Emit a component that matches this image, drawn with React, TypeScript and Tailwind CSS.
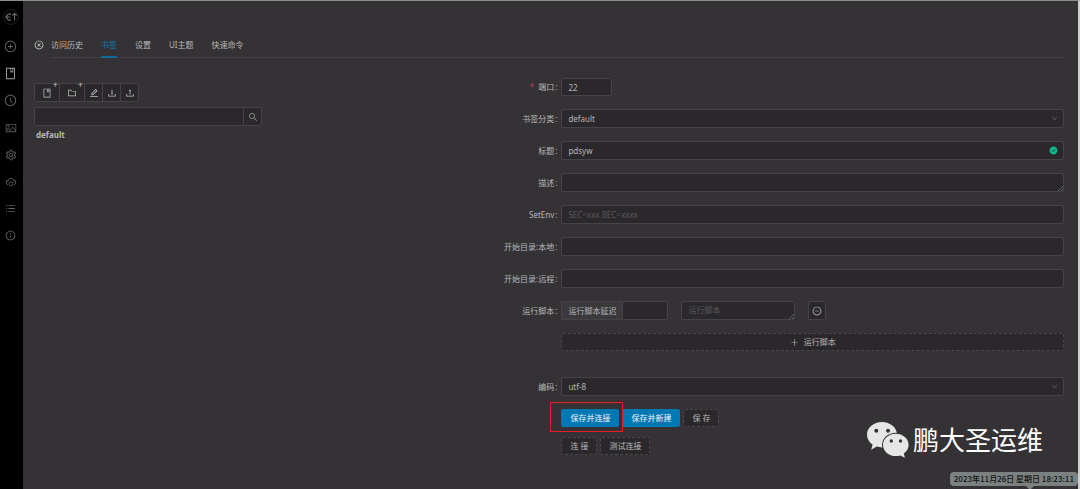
import React from "react";
import {
  AiFillCheckCircle,
  AiOutlineBook,
  AiOutlineClockCircle,
  AiOutlineCloseCircle,
  AiOutlineCloudSync,
  AiOutlineDown,
  AiOutlineDownload,
  AiOutlineEdit,
  AiOutlineFolder,
  AiOutlineInfoCircle,
  AiOutlineMinusCircle,
  AiOutlinePicture,
  AiOutlinePlus,
  AiOutlinePlusCircle,
  AiOutlineSearch,
  AiOutlineSetting,
  AiOutlineUnorderedList,
  AiOutlineUpload,
} from "react-icons/ai";

const box = "w-full min-w-0 rounded-xs border border-[#454346] bg-[#2a282b] px-1.5 leading-4 text-[#b8b7b8] outline-none placeholder:text-[#5a585b]";
const field = "h-[19px] " + box;
const dashed =
  "flex h-[18px] items-center justify-center rounded-xs border border-dashed border-[#4a484b] bg-[#2a282b] text-[#b8b7b8]";
const primary =
  "flex h-[18px] items-center justify-center rounded-xs bg-[#0078b4] px-[9px] text-[#f0f6fa]";
const tool =
  "relative flex h-[19px] items-center justify-center border border-[#454346] bg-[#2a282b] text-[10px] text-[#c4c3c4]";

function Logo() {
  return (
    <svg viewBox="0 0 16 16" className="size-4" fill="none" aria-hidden="true">
      <circle cx="8" cy="8" r="7.4" stroke="#2c2c2c" strokeWidth="0.7" />
      <path d="M8 5.400C6 4 3.600 5.500 3.600 8s2.400 3.900 4.400 2.700M2 8h5.400" stroke="#6a6a6a" strokeWidth="1.200" />
      <path d="M11.500 4.500v7M9.300 6.600l2.200-2.200 2.200 2.200" stroke="#6a6a6a" strokeWidth="1.100" />
    </svg>
  );
}

function ChatLogo() {
  return (
    <svg viewBox="0 0 42 36" className="h-9 w-[42px]" aria-hidden="true">
      <path
        d="M15 0C6.700 0 0 5.600 0 12.700c0 4.100 2.200 7.500 5.600 9.900L4.200 27.800l5.600-3.200c1.700.5 3.400.8 5.200.8 8.300 0 15-5.700 15-12.700S23.300 0 15 0Z"
        fill="#e6e6e6"
      />
      <ellipse cx="28.800" cy="23" rx="13.800" ry="12.200" fill="#343235" />
      <path
        d="M28.800 11.800c-7.100 0-12.800 4.900-12.800 11.100s5.700 11.200 12.800 11.200c1.600 0 3.100-.2 4.500-.7l4.600 2.400-1.100-4.300c3-2.100 4.800-5.100 4.800-8.600 0-6.200-5.700-11.100-12.800-11.100Z"
        fill="#e6e6e6"
      />
      <g fill="#343235">
        <circle cx="9.300" cy="8.700" r="2" />
        <circle cx="21" cy="8.700" r="2" />
        <circle cx="24.300" cy="19" r="1.700" />
        <circle cx="33.500" cy="19" r="1.700" />
      </g>
    </svg>
  );
}

const nav = [
  { name: "新建", Icon: AiOutlinePlusCircle, look: "text-[13px] text-[#646464]" },
  { name: "书签", Icon: AiOutlineBook, look: "text-[13px] text-[#a0a0a0]" },
  { name: "历史", Icon: AiOutlineClockCircle, look: "text-[13px] text-[#646464]" },
  { name: "主题", Icon: AiOutlinePicture, look: "text-[12px] text-[#585858]" },
  { name: "设置", Icon: AiOutlineSetting, look: "text-[12px] text-[#646464]" },
  { name: "同步", Icon: AiOutlineCloudSync, look: "text-[12px] text-[#646464]" },
  { name: "列表", Icon: AiOutlineUnorderedList, look: "text-[11px] text-[#646464]" },
  { name: "关于", Icon: AiOutlineInfoCircle, look: "text-[11px] text-[#646464]" },
];

const tabs = ["访问历史", "书签", "设置", "UI主题", "快速命令"];

function Row({
  label,
  id,
  required,
  className = "",
  children,
}: {
  label: string;
  id: string;
  required?: boolean;
  className?: string;
  children: React.ReactNode;
}) {
  return (
    <div className={"grid grid-cols-[68px_minmax(0,1fr)] items-center " + className}>
      <label htmlFor={id} className="pr-1 text-right whitespace-nowrap">
        {required && <span className="mr-1 text-[#c0405a]">*</span>}
        {label}
        <span className="ml-px">:</span>
      </label>
      <div className="flex">{children}</div>
    </div>
  );
}

function Select({ id, options }: { id: string; options: string[] }) {
  return (
    <div className="relative w-full">
      <select id={id} className={field + " block appearance-none"}>
        {options.map((o) => (
          <option key={o}>{o}</option>
        ))}
      </select>
      <AiOutlineDown className="pointer-events-none absolute top-1.5 right-1.5 text-[7px] text-[#6a686b]" />
    </div>
  );
}

function TextArea({ id, label, placeholder, className = "" }: { id?: string; label?: string; placeholder?: string; className?: string }) {
  return (
    <div className={"relative w-full " + className}>
      <textarea
        id={id}
        aria-label={label}
        rows={1}
        placeholder={placeholder}
        className={field + " block resize-none overflow-hidden"}
      />
      <svg viewBox="0 0 5 5" className="pointer-events-none absolute right-px bottom-px size-[5px]" aria-hidden="true">
        <path d="M0 5 5 0M3 5 5 3" stroke="#7a787b" strokeWidth="0.7" />
      </svg>
    </div>
  );
}

export default function App() {
  return (
    <div className="flex min-h-screen border-t border-r-2 border-t-[#8e8d8e] border-r-[#d0d0d0] bg-[#343235] font-['Noto_Sans','Noto_Sans_CJK_SC',sans-serif] text-[8px] leading-3 text-[#b8b7b8]">
      <nav className="flex w-[23px] shrink-0 flex-col items-center bg-black pt-2 pr-0.5">
        <Logo />
        <div className="mt-2 flex flex-col">
          {nav.map(({ name, Icon, look }) => (
            <button key={name} aria-label={name} className={"flex h-[27px] items-center justify-center " + look}>
              <Icon />
            </button>
          ))}
        </div>
      </nav>

      <main className="relative flex min-w-0 flex-1 flex-col pr-3.5 pl-[11px]">
        <header className="mt-[35px] flex">
          <button aria-label="关闭" className="mt-1 mr-[7px] flex size-2.5 text-[10px] text-[#d8d8d8]">
            <AiOutlineCloseCircle />
          </button>
          <div role="tablist" className="flex flex-1 gap-[18px] border-b border-[#434144]">
            {tabs.map((t, i) => (
              <button
                key={t}
                role="tab"
                aria-selected={i === 1}
                className={
                  i === 1
                    ? "-mb-px border-b-2 border-[#0f6a9a] pt-[3px] pb-[5px] text-[#0f78b0]"
                    : "pt-[3px] pb-1.5"
                }
              >
                {t}
              </button>
            ))}
          </div>
        </header>

        <div className="flex">
          <section className="mt-[25px] w-[228px] shrink-0">
            <div className="flex">
              <button aria-label="新建书签" className={tool + " w-[26px] rounded-l-xs"}>
                <AiOutlineBook />
                <span className="absolute -top-[5px] right-px text-[9px] leading-3">+</span>
              </button>
              <button aria-label="新建分类" className={tool + " -ml-px w-[26px]"}>
                <AiOutlineFolder />
                <span className="absolute -top-[5px] right-px text-[9px] leading-3">+</span>
              </button>
              <button aria-label="编辑" className={tool + " -ml-px w-[19px]"}>
                <AiOutlineEdit />
              </button>
              <button aria-label="导入" className={tool + " -ml-px w-[19px]"}>
                <AiOutlineDownload />
              </button>
              <button aria-label="导出" className={tool + " -ml-px w-[19px] rounded-r-xs"}>
                <AiOutlineUpload />
              </button>
            </div>
            <div className="mt-[5px] flex">
              <input aria-label="搜索书签" className={field + " rounded-r-none"} />
              <button aria-label="搜索" className={tool + " -ml-px w-[19px] shrink-0 rounded-r-xs"}>
                <AiOutlineSearch className="opacity-75" />
              </button>
            </div>
            <a href="#default" className="mt-[3px] ml-0.5 block font-bold">
              default
            </a>
          </section>

          <form className="mt-5 ml-auto flex w-[55.4%] flex-col gap-[13px]" onSubmit={(e) => e.preventDefault()}>
            <Row label="端口" id="port" required>
              <input id="port" defaultValue="22" className={box + " h-[18px] max-w-[51px]"} />
            </Row>
            <Row label="书签分类" id="category">
              <Select id="category" options={["default"]} />
            </Row>
            <Row label="标题" id="title">
              <div className="relative w-full">
                <input id="title" defaultValue="pdsyw" className={field + " block"} />
                <AiFillCheckCircle className="absolute top-[5px] right-1.5 text-[9px] text-[#0db88c]" />
              </div>
            </Row>
            <Row label="描述" id="description">
              <TextArea id="description" />
            </Row>
            <Row label="SetEnv" id="env">
              <input id="env" placeholder="SEC=xxx BEC=xxxx" className={field} />
            </Row>
            <Row label="开始目录:本地" id="local">
              <input id="local" className={field} />
            </Row>
            <Row label="开始目录:远程" id="remote">
              <input id="remote" className={field} />
            </Row>
            <Row label="运行脚本" id="delay">
              <label
                htmlFor="delay"
                className="flex h-[19px] shrink-0 items-center rounded-l-xs border border-r-0 border-[#454346] bg-[#3b393c] px-1.5"
              >
                运行脚本延迟
              </label>
              <input id="delay" className={field + " max-w-[46px] rounded-l-none"} />
              <TextArea label="运行脚本" placeholder="运行脚本" className="ml-[13px] max-w-[114px]" />
              <button type="button" aria-label="删除脚本" className={tool + " ml-[13px] w-[18px] rounded-xs"}>
                <AiOutlineMinusCircle />
              </button>
            </Row>
            <div className="ml-[68px]">
              <button type="button" className={dashed + " w-full gap-[5px]"}>
                <AiOutlinePlus className="text-[9px]" />
                运行脚本
              </button>
            </div>
            <Row label="编码" id="encoding" className="mt-[13px]">
              <Select id="encoding" options={["utf-8"]} />
            </Row>
            <div className="ml-[68px]">
              <div className="flex gap-[3px]">
                <div className="relative z-10">
                  <button type="submit" className={primary}>
                    保存并连接
                  </button>
                  <span className="pointer-events-none absolute -top-[7px] -right-1 -bottom-[5px] -left-[11px] border border-[#e81c24]" />
                </div>
                <button type="button" className={primary}>
                  保存并新建
                </button>
                <button type="button" className={dashed + " px-2"}>
                  保 存
                </button>
              </div>
              <div className="mt-2.5 flex gap-[3px]">
                <button type="button" className={dashed + " px-2"}>
                  连 接
                </button>
                <button type="button" className={dashed + " px-2"}>
                  测试连接
                </button>
              </div>
            </div>
          </form>
        </div>

        <div className="absolute right-[35px] bottom-[31px] flex items-center gap-1 text-[26px] leading-9 text-white">
          <ChatLogo />
          鹏大圣运维
        </div>
        <div className="absolute right-0 bottom-[3px] rounded-sm bg-[#7b8180] px-1 py-px font-['Noto_Sans_CJK_SC',sans-serif] font-medium text-[#101212]">
          2023年11月26日 星期日 18:23:11
          <span className="absolute top-full right-11 border-x-4 border-t-4 border-x-transparent border-t-[#7b8180]" />
        </div>
      </main>
    </div>
  );
}
